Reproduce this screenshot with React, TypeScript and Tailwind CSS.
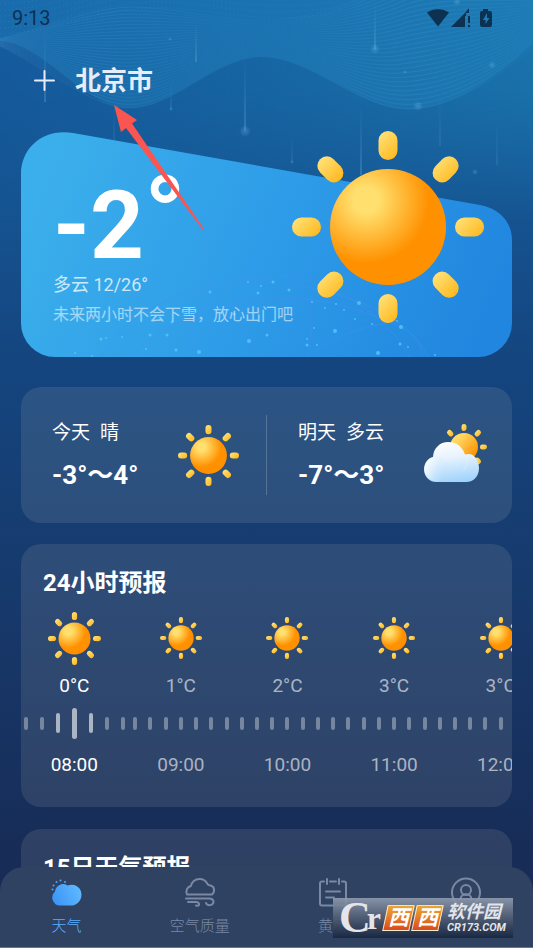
import React, { useId } from 'react';

interface HourForecast {
  time: string;
  temp: string;
  active?: boolean;
}

const hours: HourForecast[] = [
  { time: '08:00', temp: '0°C', active: true },
  { time: '09:00', temp: '1°C' },
  { time: '10:00', temp: '2°C' },
  { time: '11:00', temp: '3°C' },
  { time: '12:00', temp: '3°C' },
];

const rayAngles = [0, 45, 90, 135, 180, 225, 270, 315];
const cloudRayAngles = [225, 270, 315, 0, 45];

interface RaysProps {
  id: string;
  angles: number[];
  cx: number;
  cy: number;
  inner: number;
  outer: number;
  width: number;
}

const Rays = ({ id, angles, cx, cy, inner, outer, width }: RaysProps) => (
  <>
    {angles.map(angle => {
      const rad = (angle * Math.PI) / 180;
      const mid = (inner + outer) / 2;
      const mx = cx + Math.cos(rad) * mid;
      const my = cy + Math.sin(rad) * mid;
      const reach = width / 2;
      return (
        <g key={angle}>
          <linearGradient id={`${id}r${angle}`} gradientUnits="userSpaceOnUse" x1={mx - reach} y1={my - reach} x2={mx + reach} y2={my + reach}>
            <stop offset="0" stopColor="#ffe075" />
            <stop offset="1" stopColor="#ffba22" />
          </linearGradient>
          <line
            x1={cx + Math.cos(rad) * (inner + width / 2)}
            y1={cy + Math.sin(rad) * (inner + width / 2)}
            x2={cx + Math.cos(rad) * (outer - width / 2) + 0.01}
            y2={cy + Math.sin(rad) * (outer - width / 2) + 0.01}
            stroke={`url(#${id}r${angle})`}
            strokeWidth={width}
            strokeLinecap="round"
          />
        </g>
      );
    })}
  </>
);

const SunIcon = ({ className }: { className: string }) => {
  const id = useId();
  return (
    <svg viewBox="0 0 192 192" className={className} aria-hidden="true">
      <radialGradient id={`${id}d`} cx="0.31" cy="0.27" r="0.54">
        <stop offset="0.2" stopColor="#ffe06e" />
        <stop offset="1" stopColor="#ff9100" />
      </radialGradient>
      <Rays id={id} angles={rayAngles} cx={96} cy={96} inner={67} outer={96} width={19} />
      <circle cx="96" cy="96" r="58" fill={`url(#${id}d)`} />
    </svg>
  );
};

const PartlyCloudyIcon = ({ className }: { className: string }) => {
  const id = useId();
  return (
    <svg viewBox="-3 1 64 64" className={className} aria-hidden="true">
      <linearGradient id={`${id}s`} x1="0.1" y1="0.1" x2="0.9" y2="0.8">
        <stop offset="0.2" stopColor="#ffd964" />
        <stop offset="1" stopColor="#ff9100" />
      </linearGradient>
      <linearGradient id={`${id}c`} gradientUnits="userSpaceOnUse" x1="26" y1="18" x2="32" y2="60">
        <stop offset="0" stopColor="#ffffff" />
        <stop offset="0.4" stopColor="#e8f3fd" />
        <stop offset="1" stopColor="#9fd3fb" />
      </linearGradient>
      <linearGradient id={`${id}l`} x1="0.1" y1="0.4" x2="0.9" y2="0.6">
        <stop offset="0" stopColor="#ffffff" stopOpacity="0.7" />
        <stop offset="1" stopColor="#b9dffc" stopOpacity="0" />
      </linearGradient>
      <Rays id={id} angles={cloudRayAngles} cx={40} cy={25} inner={16} outer={23} width={5} />
      <circle cx="40" cy="25" r="14" fill={`url(#${id}s)`} />
      <path d="M12 60C5 60 0 54 0 47.500C0 41 4 36 9 35C9.500 26 16 20 24 20C32 20 38 24 41 32.500C49 30 55 37 55 46C55 54 50 60 42 60Z" fill={`url(#${id}c)`} />
      <circle cx="13" cy="47" r="12.500" fill={`url(#${id}l)`} />
      <path d="M41 32.500C44 37 44 44 39 49" fill="none" stroke="#ffffff" strokeOpacity="0.25" />
    </svg>
  );
};

// Backdrop: a ribbon of fine lines blended between two boundary curves
const ribbonTop = [41, 41, 8, 7, 7, 20, 20, 20, 2, -24, -40, -22, -14];
const ribbonBottom = [41, 41, 108, 108, 108, 57, 57, 57, 109, 109, 109, 80, 43];
const ribbonX = [-20, 12, 85, 129, 175, 215, 262, 310, 360, 408, 450, 495, 540];

const ribbonPath = (t: number) => {
  const p = ribbonX.map((x, i) => `${x} ${(ribbonTop[i] * (1 - t) + ribbonBottom[i] * t).toFixed(1)}`);
  return `M${p[0]}C${p.slice(1, 4).join(' ')}C${p.slice(4, 7).join(' ')}C${p.slice(7, 10).join(' ')}C${p.slice(10, 13).join(' ')}`;
};

const ribbon = Array.from({ length: 30 }, (_, i) => ribbonPath(i / 29));

const streaks = [
  { x: 45, from: 27, to: 102, w: 2 },
  { x: 196, from: 22, to: 62, w: 2 },
  { x: 245, from: 55, to: 130, w: 2 },
  { x: 114, from: 105, to: 145, w: 1 },
  { x: 171, from: 80, to: 109, w: 1 },
  { x: 375, from: 0, to: 49, w: 2 },
  { x: 292, from: 135, to: 162, w: 1 },
  { x: 361, from: 105, to: 175, w: 2 },
  { x: 440, from: 95, to: 146, w: 1 },
  { x: 497, from: 118, to: 165, w: 1 },
];

const glows = [[245, 131, 6], [375, 49, 5], [457, 2, 4], [492, 65, 4], [475, 172, 3], [292, 162, 2], [170, 39, 2], [405, 72, 2], [418, 106, 5], [171, 109, 2]];

const Backdrop = () => (
  <svg viewBox="0 0 533 192" preserveAspectRatio="none" className="absolute inset-x-0 top-0 h-48 w-full" aria-hidden="true">
    <defs>
      <linearGradient id="streak" x1="0" y1="0" x2="0" y2="1">
        <stop offset="0" stopColor="#3fa0cf" stopOpacity="0" />
        <stop offset="1" stopColor="#6db8e0" stopOpacity="0.3" />
      </linearGradient>
      <linearGradient id="ribbonStroke" gradientUnits="userSpaceOnUse" x1="0" y1="0" x2="533" y2="0">
        <stop offset="0" stopColor="#6cbbe6" stopOpacity="0.06" />
        <stop offset="0.2" stopColor="#6cbbe6" stopOpacity="0.12" />
        <stop offset="0.48" stopColor="#6cbbe6" stopOpacity="0.02" />
        <stop offset="0.58" stopColor="#6cbbe6" stopOpacity="0.04" />
        <stop offset="0.78" stopColor="#6cbbe6" stopOpacity="0.14" />
        <stop offset="1" stopColor="#6cbbe6" stopOpacity="0.05" />
      </linearGradient>
      <radialGradient id="glow">
        <stop offset="0" stopColor="#6fc0ee" stopOpacity="0.35" />
        <stop offset="1" stopColor="#6fc0ee" stopOpacity="0" />
      </radialGradient>
    </defs>
    <path d="M0 0H533V43C495 80 450 109 408 109C360 109 310 57 262 57C215 57 175 108 129 108C85 108 40 41 0 41Z" fill="#268ac6" fillOpacity="0.3" />
    {ribbon.map((d, i) => (
      <path key={i} d={d} fill="none" stroke="url(#ribbonStroke)" strokeWidth="1" />
    ))}
    {[4, 10, 16, 22, 28, 34].map(y => (
      <path key={y} d={`M0 ${y}C60 ${y - 2} 90 ${y - 24} 150 ${y - 26}S250 ${y - 8} 330 ${y - 20}`} fill="none" stroke="#7cc4ea" strokeOpacity="0.14" strokeDasharray="1 3" />
    ))}
    {streaks.map(s => (
      <rect key={s.x} x={s.x - s.w / 2} y={s.from} width={s.w} height={s.to - s.from} fill="url(#streak)" />
    ))}
    {glows.map(([x, y, r]) => (
      <circle key={`${x}-${y}`} cx={x} cy={y} r={r} fill="url(#glow)" />
    ))}
  </svg>
);

const sparkles = [
  [54, 111, 1], [71, 114, 1], [80, 97, 1.500], [85, 96, 1], [101, 95, 1], [125, 107, 1], [129, 93, 1.500], [146, 93, 1.500], [151, 80, 1.500],
  [155, 108, 1.500], [178, 110, 2], [189, 50, 1.500], [213, 72, 1.500], [227, 40, 1], [237, 51, 1.500], [240, 44, 1], [228, 99, 2], [246, 93, 1.500],
  [252, 40, 1.500], [268, 48, 1.500], [291, 60, 1], [304, 66, 1], [315, 62, 1], [323, 68, 1], [338, 61, 2], [334, 77, 1], [351, 82, 1],
  [376, 79, 1], [380, 85, 2], [293, 86, 1], [314, 89, 2], [286, 97, 1], [286, 103, 1.500], [296, 103, 1], [357, 111, 2], [379, 102, 1.500], [387, 105, 1], [414, 113, 1],
];

const HeroShape = () => (
  <svg viewBox="0 0 491 225" preserveAspectRatio="none" className="absolute inset-0 h-full w-full" aria-hidden="true">
    <defs>
      <linearGradient id="hero" x1="0" y1="0.4" x2="1" y2="0.6">
        <stop offset="0" stopColor="#3bafeb" />
        <stop offset="0.5" stopColor="#2e9ce8" />
        <stop offset="1" stopColor="#2186df" />
      </linearGradient>
    </defs>
    <path d="M0 42C0 16 22 -4 52 1L459 73C478 76 491 90 491 108V191A34 34 0 0 1 457 225H34A34 34 0 0 1 0 191Z" fill="url(#hero)" />
    <g fill="none" stroke="#4a8ff0" strokeOpacity="0.4">
      <path d="M80 225C110 170 200 138 270 152S380 180 408 225" />
      <path d="M110 225C150 180 250 150 330 176S395 210 402 225" />
      <path d="M175 225C160 190 185 160 235 146S360 175 389 225" />
      <path d="M215 170L236 225M287 225C292 210 288 180 290 165M287 225C310 205 340 195 372 190" />
    </g>
    {sparkles.map(([x, y, r]) => (
      <circle key={`${x}-${y}`} cx={x} cy={y + 110} r={r} fill="#55c8fb" fillOpacity="0.8" />
    ))}
  </svg>
);

const StatusIcons = () => (
  <svg viewBox="0 0 66 20" className="h-5 w-[66px] fill-[#0d3150]" aria-hidden="true">
    <path d="M0 4.500C6 0 16 0 22 4.500L11 18.500Z" />
    <path d="M24 19L38 5V19Z" />
    <path d="M38 5L42 0V5H39V8H38Z" />
    <rect x="41" y="8" width="2" height="7" />
    <rect x="41" y="17" width="2" height="2" />
    <path fillRule="evenodd" d="M56 1H61V3H63Q65 3 65 5V17Q65 19 63 19H55Q53 19 53 17V5Q53 3 55 3H56ZM60 5L56 12H58.500V16L62.500 10H60Z" />
  </svg>
);

const WeatherIcon = () => (
  <svg viewBox="0 0 32 32" className="size-8" aria-hidden="true">
    <linearGradient id="navCloud" gradientUnits="userSpaceOnUse" x1="2" y1="26" x2="30" y2="12">
      <stop offset="0" stopColor="#3b93f7" />
      <stop offset="1" stopColor="#60baff" />
    </linearGradient>
    <path d="M9 28.500A8 8 0 0 1 4 14.500A8 8 0 0 1 16.500 8.500Q24 6 28.500 11.500A11 11 0 0 1 22 28.500Z" fill="url(#navCloud)" />
    <g fill="#4da6ff">
      <circle cx="1.500" cy="12.500" r="1" />
      <circle cx="2.500" cy="8.500" r="1" />
      <circle cx="5.500" cy="5" r="1" />
      <circle cx="9.500" cy="3.500" r="1" />
      <circle cx="14" cy="5" r="1" />
    </g>
  </svg>
);

const AirIcon = () => (
  <svg viewBox="0 0 32 32" className="size-8 fill-none stroke-[#7a88a3] stroke-2" strokeLinecap="round" strokeLinejoin="round" aria-hidden="true">
    <path d="M3 17.500H28C31 15 31 9.500 26.500 8.500C25.500 8 24 8.500 23.500 7C22 4 19 2 15.500 2C11 2 7.500 5 7 9C3 10 1.500 13.500 3 17.500Z" />
    <path d="M2 21.500H25Q29.500 21.500 29.500 25C29 29 23 29 22 26" />
    <path d="M4 25H12.500C16.500 25.500 15.500 30 12 28.500" />
  </svg>
);

const AlmanacIcon = () => (
  <svg viewBox="0 0 32 32" className="size-8 fill-none stroke-[#7a88a3] stroke-2" strokeLinecap="round" strokeLinejoin="round" aria-hidden="true">
    <path d="M7 4.500H5Q3 4.500 3 6.500V26.500Q3 28.500 5 28.500H27Q29 28.500 29 26.500V6.500Q29 4.500 27 4.500H25M13 4.500H19M10 2V7M22 2V7M9 14.500H23M9 20.500H17" />
  </svg>
);

const ProfileIcon = () => (
  <svg viewBox="0 0 32 32" className="size-8 fill-none stroke-[#7a88a3] stroke-2" strokeLinecap="round" aria-hidden="true">
    <circle cx="16" cy="15.500" r="14" />
    <circle cx="16" cy="13" r="5" />
    <path d="M10.500 22C11 15.500 21 15.500 21.500 22" />
  </svg>
);

const tabs = [
  { label: '天气', icon: <WeatherIcon />, active: true },
  { label: '空气质量', icon: <AirIcon /> },
  { label: '黄历', icon: <AlmanacIcon /> },
  { label: '我的', icon: <ProfileIcon /> },
];

interface DaySummaryProps {
  day: string;
  weather: string;
  range: string;
  icon: React.ReactNode;
}

const DaySummary = ({ day, weather, range, icon }: DaySummaryProps) => (
  <div className="flex flex-1 items-center justify-between pr-[27px] pl-[31px]">
    <div>
      <p className="flex gap-2.5 text-[19px] leading-7">
        <span>{day}</span>
        <span>{weather}</span>
      </p>
      <p className="mt-3 text-[26px] leading-8 font-bold">{range}</p>
    </div>
    {icon}
  </div>
);

const Ticks = ({ active }: { active?: boolean }) => (
  <div className={`flex h-8 w-full items-center ${active ? 'justify-between px-[3px]' : 'justify-around'}`}>
    {[0, 1, 2, 3, 4, 5, 6].map(i => {
      let size = 'h-[13px] w-1 bg-white/35';
      if (active && i === 3) size = 'h-[31px] w-[5px] bg-white/60';
      else if (active && (i === 2 || i === 4)) size = 'h-5 w-1 bg-white/60';
      return <span key={i} className={`rounded-full ${size}`} />;
    })}
  </div>
);

const Watermark = () => (
  <div className="absolute right-5 bottom-2.5 flex h-10 w-[180px] items-center bg-linear-to-b from-[#919caf]/90 to-[#192740]/95 pl-1.5 text-[#e3e5ea]">
    <span className="flex w-[46px] items-center font-['Liberation_Serif',serif] text-[44px] leading-10 font-bold">
      C<span className="-ml-1 text-[32px]">r</span>
    </span>
    <span className="flex gap-0.5">
      {[0, 1].map(i => (
        <span key={i} className="relative flex h-[26px] w-[27px] items-center justify-center text-[21px] leading-6 font-bold text-white italic">
          <span className="absolute inset-0 -skew-x-12 border border-white/80 bg-linear-to-b from-[#eda52f] to-[#d9491c]" />
          <span className="relative">西</span>
        </span>
      ))}
    </span>
    <span className="flex flex-col pl-1.5">
      <span className="text-[18px] leading-5 font-bold italic">软件园</span>
      <span className="text-[11px] leading-3 font-bold italic">CR173.COM</span>
    </span>
  </div>
);

const App = () => {
  return (
    <div className="relative h-screen overflow-hidden bg-linear-to-b from-[#1769ab] via-[#14457f] via-38% to-[#172850] font-['Roboto','Noto_Sans_CJK_SC',sans-serif] text-white">
      <div className="absolute inset-x-0 top-0 h-56 bg-linear-to-l from-[#1c7cb0]/60 to-[#12488f]/30 mask-b-from-40%" />
      <Backdrop />

      <main className="relative h-full overflow-y-auto px-[21px] pb-24 [scrollbar-width:none]">
        <div className="-mx-[21px] flex h-9 items-center justify-between pr-10 pl-3 text-[20px] text-[#0d3150]">
          <span>9:13</span>
          <StatusIcons />
        </div>

        <header className="flex h-[88px] items-center gap-5 pl-[13px]">
          <button type="button" aria-label="添加城市" className="text-[#e6edf8]">
            <svg viewBox="0 0 21 21" className="size-[21px] fill-none stroke-current stroke-2" strokeLinecap="round">
              <path d="M10.500 1V20M1 10.500H20" />
            </svg>
          </button>
          <h1 className="pt-0.5 text-[26px] leading-9 font-bold text-[#e6edf8]">北京市</h1>
        </header>

        <section className="relative mt-2 h-[225px]">
          <HeroShape />
          <div className="relative pt-7 pl-8">
            <div className="flex text-[94px] leading-[94px] font-bold">
              <span className="pt-[19px]">-2</span>
              <span className="pt-2 text-[108px]">°</span>
            </div>
            <p className="text-[18px] leading-6 text-white/75">多云 12/26°</p>
            <p className="mt-1.5 text-[16px] leading-6 text-white/55">未来两小时不会下雪，放心出门吧</p>
          </div>
          <SunIcon className="absolute right-7 -top-px size-48" />
        </section>

        <section className="mt-[30px] flex h-[136px] items-center rounded-[20px] bg-[#f1e6c8]/11">
          <DaySummary day="今天" weather="晴" range="-3°～4°" icon={<SunIcon className="size-[61px]" />} />
          <div className="h-20 w-px bg-white/20" />
          <DaySummary day="明天" weather="多云" range="-7°～3°" icon={<PartlyCloudyIcon className="size-16 overflow-visible" />} />
        </section>

        <section className="mt-[21px] h-[263px] overflow-hidden rounded-[20px] bg-[#f1e6c8]/11 pt-[21px]">
          <h2 className="pl-[22px] text-[24px] leading-9 font-bold">24小时预报</h2>
          <div className="mt-[11px] grid w-screen grid-cols-5">
            {hours.map(h => (
              <div key={h.time} className={`flex flex-col items-center text-[19px] leading-6 ${h.active ? 'text-white' : 'text-white/60'}`}>
                <div className="flex h-[52px] items-center">
                  <SunIcon className={h.active ? 'size-[53px]' : 'size-[42px]'} />
                </div>
                <span className="mt-2.5">{h.temp}</span>
                <div className="mt-[9px] mb-3.5 w-full">
                  <Ticks active={h.active} />
                </div>
                <span>{h.time}</span>
              </div>
            ))}
          </div>
        </section>

        <section className="mt-[22px] h-[263px] rounded-[20px] bg-[#f1e6c8]/11 pt-[21px]">
          <h2 className="pl-[22px] text-[24px] leading-9 font-bold">15日天气预报</h2>
        </section>
      </main>

      <nav className="absolute inset-x-0 bottom-0 grid h-[81px] grid-cols-4 rounded-t-3xl border-b border-[#6d7686] bg-[#2f4262]">
        {tabs.map(tab => (
          <a key={tab.label} href="#" className={`flex flex-col items-center pt-2.5 text-[15px] leading-6 font-light ${tab.active ? 'text-[#5caeff]' : 'text-[#7a88a3]'}`}>
            {tab.icon}
            <span className="mt-[5px]">{tab.label}</span>
          </a>
        ))}
      </nav>

      <svg viewBox="0 0 92 126" className="absolute top-[105px] left-28 h-[126px] w-[92px] fill-[#fb5552]" aria-hidden="true">
        <path d="M2 0L25 15L20 18.500L92 124L91 125L14 23L9 27Z" />
      </svg>
      <Watermark />
    </div>
  );
};

export default App;
